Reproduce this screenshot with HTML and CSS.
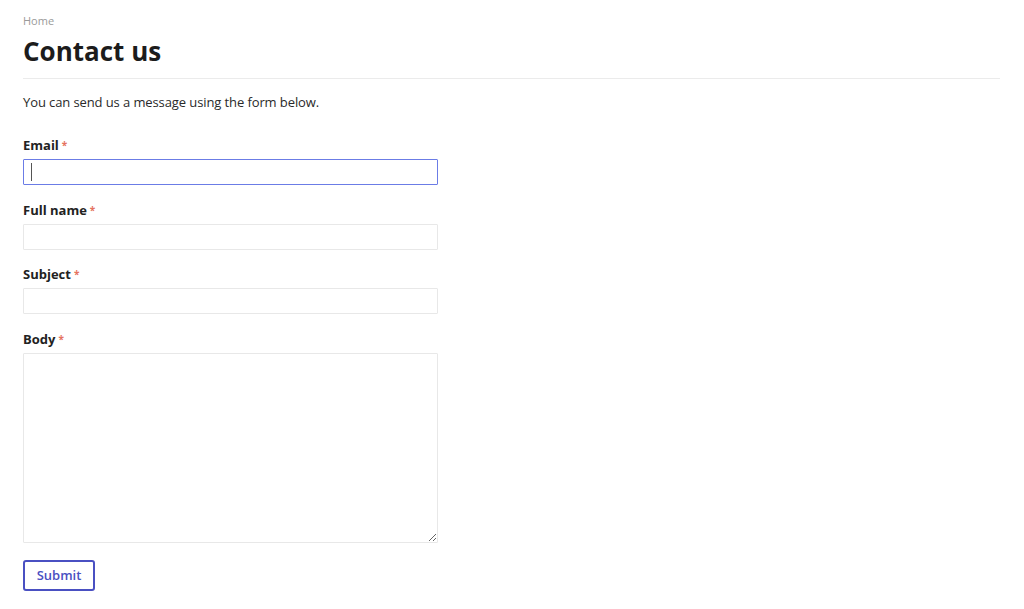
FILE: index.html
```html
<!DOCTYPE html>
<html lang="en">
<head>
<meta charset="utf-8">
<title>Contact us</title>
<link rel="stylesheet" href="styles.css">
</head>
<body>
<main class="page">
  <nav class="breadcrumb"><a href="#">Home</a></nav>
  <h1 class="title">Contact us</h1>
  <p class="intro">You can send us a message using the form below.</p>
  <form class="form">
    <div class="field">
      <label class="label" for="email">Email<span class="req">*</span></label>
      <span class="control has-caret"><input class="input is-focused" id="email" type="email"></span>
    </div>
    <div class="field">
      <label class="label" for="name">Full name<span class="req">*</span></label>
      <span class="control"><input class="input" id="name" type="text"></span>
    </div>
    <div class="field">
      <label class="label" for="subject">Subject<span class="req">*</span></label>
      <span class="control"><input class="input" id="subject" type="text"></span>
    </div>
    <div class="field field-last">
      <label class="label" for="body">Body<span class="req">*</span></label>
      <span class="control"><textarea class="input textarea" id="body"></textarea></span>
    </div>
    <button class="submit" type="button">Submit</button>
  </form>
</main>
</body>
</html>
```

FILE: styles.css
```css
* { box-sizing: border-box; }
html, body { margin: 0; padding: 0; background: #fff; }
body {
  font-family: "Open Sans", "Liberation Sans", sans-serif;
  color: #222;
  font-size: 13px;
}
.page {
  padding: 12px 24px 0 23px;
}
.breadcrumb {
  font-size: 11px;
  line-height: 18px;
}
.breadcrumb a {
  color: #9a9a9a;
  text-decoration: none;
}
.title {
  margin: 2px 0 0;
  font-size: 26px;
  line-height: 38px;
  font-weight: 700;
  color: #1c1c1c;
  padding-bottom: 8px;
  border-bottom: 1px solid #ebebeb;
}
.intro {
  margin: 13px 0 0;
  line-height: 20px;
  color: #2a2a2a;
  letter-spacing: -0.1px;
}
.form {
  margin-top: 23px;
  width: 415px;
}
.field {
  display: flex;
  flex-direction: column;
  margin-bottom: 14.7px;
}
.field-last { margin-bottom: 16.5px; }
.label {
  font-weight: 700;
  line-height: 20px;
  margin-bottom: 4px;
  color: #222;
}
.req {
  color: #e5735f;
  font-size: 10px;
  margin-left: 3px;
  vertical-align: 1px;
}
.control {
  position: relative;
  display: block;
  line-height: 0;
}
.has-caret::after {
  content: "";
  position: absolute;
  left: 8px;
  top: 4px;
  width: 1px;
  height: 18px;
  background: #555;
}
.input {
  display: block;
  width: 415px;
  height: 26px;
  border: 1px solid #e8e8e8;
  border-radius: 1px;
  padding: 2px 8px;
  font-family: inherit;
  font-size: 13px;
  color: #222;
  outline: none;
  background: #fff;
}
.form .input.is-focused,
.form .input:focus {
  border-color: #6b7ce6;
  outline: none;
}
.textarea {
  height: 190px;
  resize: vertical;
}
.submit {
  display: block;
  width: 72px;
  height: 31px;
  border: 2px solid #4a50c2;
  border-radius: 3px;
  background: #fff;
  color: #4a50c2;
  font-family: inherit;
  font-size: 13px;
  font-weight: 600;
  padding: 0;
}
```
